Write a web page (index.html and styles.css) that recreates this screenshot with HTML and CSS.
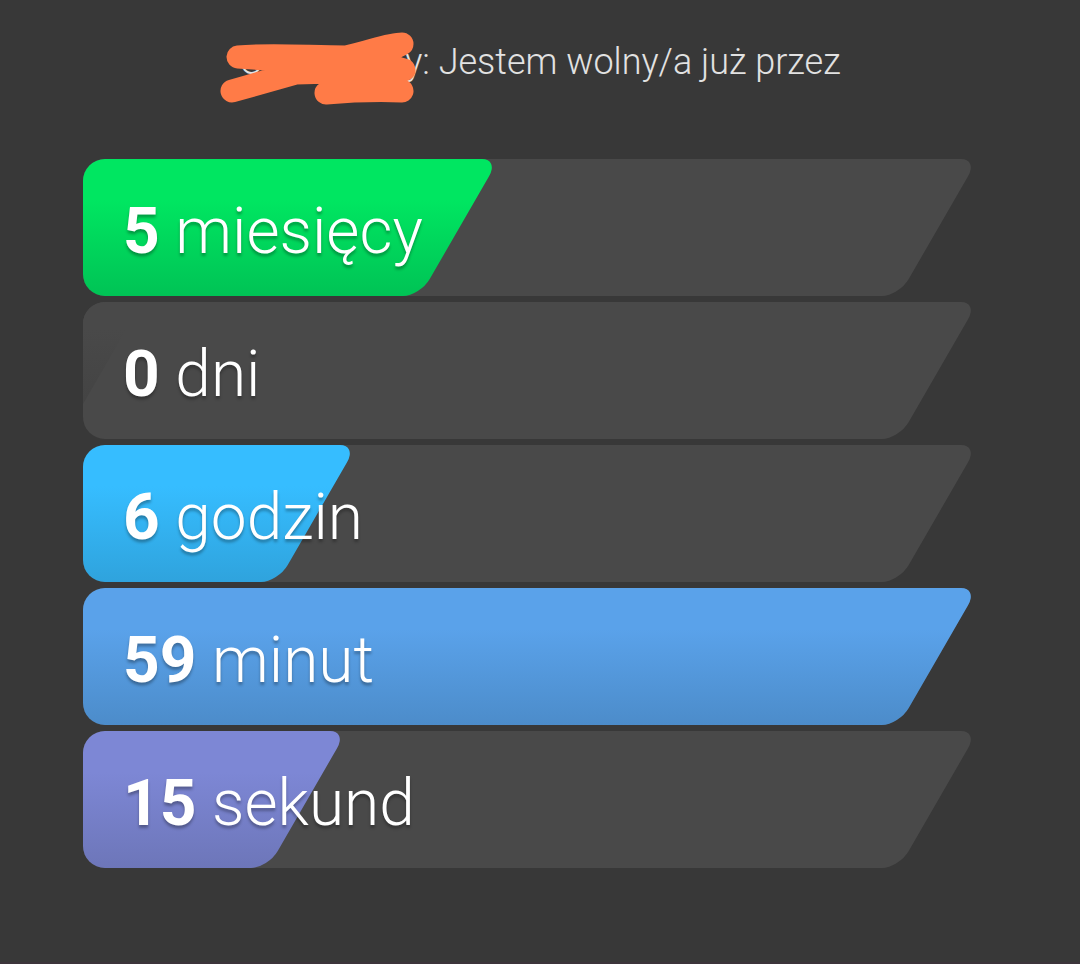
FILE: index.html
```
<!DOCTYPE html>
<html lang="pl">
  <head>
    <meta charset="UTF-8" />
    <meta name="viewport" content="width=device-width, initial-scale=1.0" />
    <title>Licznik</title>
    <link rel="stylesheet" href="styles.css">
  </head>
  <body>
    <main class="counter">
      <h1 class="title">
        <span class="name">O
          <svg class="scribble" width="198" height="74" viewBox="0 0 198 74" aria-hidden="true">
            <path d="M18 25C50 22 90 25 126 25C150 20 168 12 182 12L150 28L184 38L76 41L12 59L76 41L184 38L150 48L182 59C155 58 130 59 106 61L130 45L150 28L120 28L80 38L90 30Z" />
          </svg>
        </span>y: Jestem wolny/a już przez
      </h1>

      <ul class="bars">
        <li class="bar">
          <div class="fill months" style="width: 46.5%"></div>
          <p class="label"><b>5</b> miesięcy</p>
        </li>
        <li class="bar">
          <div class="fill days" style="width: 6.6%"></div>
          <p class="label"><b>0</b> dni</p>
        </li>
        <li class="bar">
          <div class="fill hours" style="width: 30.6%"></div>
          <p class="label"><b>6</b> godzin</p>
        </li>
        <li class="bar">
          <div class="fill minutes" style="width: 100%"></div>
          <p class="label"><b>59</b> minut</p>
        </li>
        <li class="bar">
          <div class="fill seconds" style="width: 29.5%"></div>
          <p class="label"><b>15</b> sekund</p>
        </li>
      </ul>
    </main>
  </body>
</html>
```
FILE: styles.css
```
* {
  box-sizing: border-box;
}
body {
  margin: 0;
  background: #383838;
  color: #fff;
  font-family: Roboto, "Liberation Sans", sans-serif;
  font-weight: 300;
}
.counter {
  min-height: 100vh;
  padding: 40px 0;
  border-bottom: 2px solid #3c343b;
}
.title {
  margin: 0 0 75px;
  color: #e2e2e2;
  font-size: 36px;
  font-weight: 300;
  line-height: 44px;
  text-align: center;
}
.name {
  display: inline-block;
  position: relative;
  width: 166px;
  text-align: left;
}
/* marker drawn over the name */
.scribble {
  position: absolute;
  top: -8px;
  left: -19px;
  fill: #ff7b47;
  stroke: #ff7b47;
  stroke-width: 23px;
  stroke-linecap: round;
  stroke-linejoin: round;
}
.bars {
  display: flex;
  flex-direction: column;
  gap: 6px;
  margin: 0 102px 0 83px;
  padding: 0;
  list-style: none;
}
.bar {
  position: relative;
  overflow: hidden;
  padding: 35px 40px 27px;
  border-radius: 22px 0 0 22px;
}
/* slanted track and fill, the left side is cut off by the bar */
.bar::before,
.fill::before {
  content: "";
  position: absolute;
  inset: 0 0 0 -120px;
  border-radius: 17px;
  transform: skewX(-30deg);
  transform-origin: top right;
}
.bar::before {
  background: #494949;
}
.fill {
  position: absolute;
  top: 0;
  bottom: 0;
  left: 0;
}
.months::before {
  background: linear-gradient(#00e661 30%, #00c355);
}
.days::before {
  background: linear-gradient(#494949 20%, #414141);
}
.hours::before {
  background: linear-gradient(#36bdff 30%, #2fa3dd);
}
.minutes::before {
  background: linear-gradient(#5aa2ea 30%, #4c8cca);
}
.seconds::before {
  background: linear-gradient(#7d87d5 30%, #6d76b9);
}
.label {
  position: relative;
  margin: 0;
  font-size: 64px;
  line-height: 75px;
  text-shadow: 0 3px 3px rgba(0, 0, 0, 0.3);
}
.label b {
  font-weight: 700;
}
```
